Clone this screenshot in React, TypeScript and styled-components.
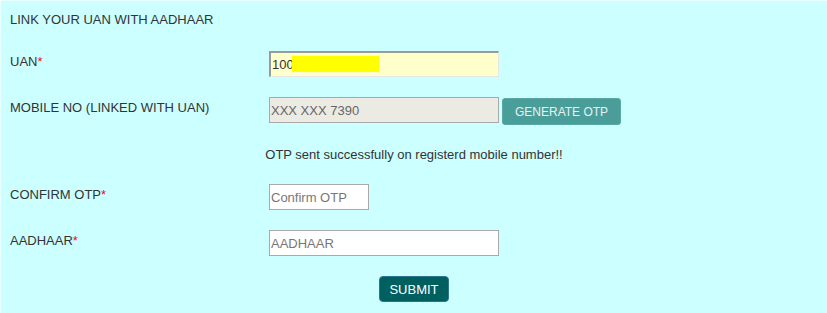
import React from "react";
import styled, { createGlobalStyle } from "styled-components";

const Global = createGlobalStyle`
  html, body { margin: 0; padding: 0; }
  body { font-family: "Liberation Sans", Arial, sans-serif; }
`;

const Panel = styled.div`
  box-sizing: border-box;
  width: 827px;
  height: 313px;
  background: #ccffff;
  border-top: 1px solid #ecffff;
  border-left: 1px solid #ecffff;
  padding: 11px 9px 0 9px;
  color: #333;
  font-size: 13px;
  line-height: 15px;
`;

const Heading = styled.div`
  color: #333;
  margin-bottom: 24px;
`;

const Form = styled.div`
  display: flex;
  flex-direction: column;
  gap: 20px;
`;

const Row = styled.div`
  display: grid;
  grid-template-columns: 259px auto;
  align-items: start;
  height: 26px;
`;

const Label = styled.div`
  padding-top: 3px;
  color: #333;
`;

const Req = styled.span`
  color: #ff0033;
`;

const Field = styled.div`
  display: flex;
  align-items: flex-start;
  gap: 3px;
  height: 26px;
  position: relative;
`;

const Input = styled.input<{ $w: number; $variant?: "uan" | "disabled" }>`
  box-sizing: border-box;
  width: ${(p) => p.$w}px;
  height: 26px;
  margin: 0;
  padding: 0 1px;
  font-family: "Liberation Sans", Arial, sans-serif;
  font-size: 13px;
  color: ${(p) => (p.$variant === "disabled" ? "#666" : "#333")};
  background: ${(p) =>
    p.$variant === "uan" ? "#ffffcc" : p.$variant === "disabled" ? "#ebebe4" : "#fff"};
  border: 1px solid #a9a9a9;
  ${(p) =>
    p.$variant === "uan"
      ? `border-top: 2px solid #9a9a9a; border-left: 2px solid #9a9a9a; border-right: 1px solid #e6e6e6; border-bottom: 1px solid #e6e6e6;`
      : ""}
  outline: none;
  &::placeholder { color: #777; }
`;

const Redact = styled.div`
  position: absolute;
  left: 23px;
  top: 5px;
  width: 87px;
  height: 16px;
  background: #ffff00;
`;

const GenButton = styled.button`
  box-sizing: border-box;
  height: 27px;
  margin-top: 1px;
  padding: 0 12px;
  background: #4a9e9a;
  border: 1px solid #5aa8a6;
  border-radius: 3px;
  color: #e6f2f2;
  font-family: "Liberation Sans", Arial, sans-serif;
  font-size: 12px;
`;

const Message = styled.div`
  padding: 4px 0 2px;
  text-align: center;
  color: #333;
`;

const SubmitWrap = styled.div`
  display: flex;
  justify-content: center;
`;

const SubmitButton = styled.button`
  box-sizing: border-box;
  width: 70px;
  height: 26px;
  padding: 0;
  background: #006060;
  border: 1px solid #2e7390;
  border-radius: 4px;
  color: #fff;
  font-family: "Liberation Sans", Arial, sans-serif;
  font-size: 13px;
`;

export default function App() {
  return (
    <>
      <Global />
      <Panel>
        <Heading>LINK YOUR UAN WITH AADHAAR</Heading>
        <Form>
          <Row>
            <Label>
              UAN<Req>*</Req>
            </Label>
            <Field>
              <Input $w={230} $variant="uan" defaultValue="100" />
              <Redact />
            </Field>
          </Row>
          <Row>
            <Label>MOBILE NO (LINKED WITH UAN)</Label>
            <Field>
              <Input $w={230} $variant="disabled" defaultValue="XXX XXX 7390" disabled />
              <GenButton>GENERATE OTP</GenButton>
            </Field>
          </Row>
          <Message>OTP sent successfully on registerd mobile number!!</Message>
          <Row>
            <Label>
              CONFIRM OTP<Req>*</Req>
            </Label>
            <Field>
              <Input $w={100} placeholder="Confirm OTP" />
            </Field>
          </Row>
          <Row>
            <Label>
              AADHAAR<Req>*</Req>
            </Label>
            <Field>
              <Input $w={230} placeholder="AADHAAR" />
            </Field>
          </Row>
          <SubmitWrap>
            <SubmitButton>SUBMIT</SubmitButton>
          </SubmitWrap>
        </Form>
      </Panel>
    </>
  );
}
